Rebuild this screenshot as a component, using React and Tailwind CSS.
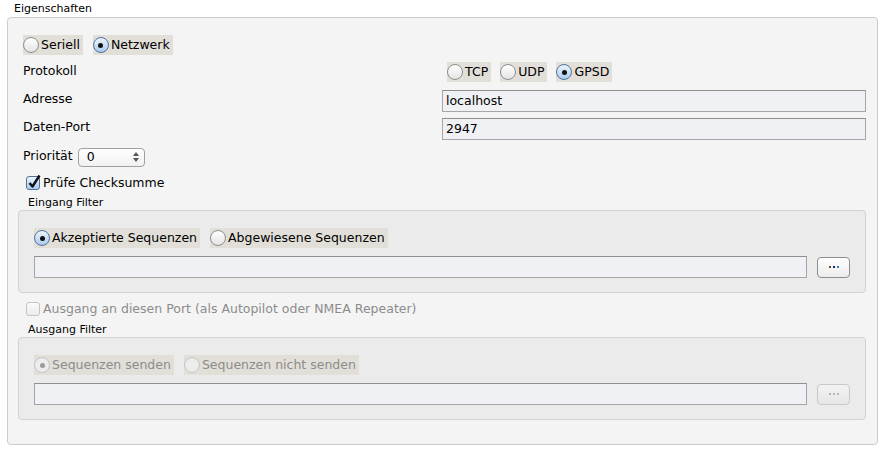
import React from 'react';

const font = { fontFamily: '"DejaVu Sans", "Liberation Sans", sans-serif' };

function Radio({ checked, disabled, label }) {
  return (
    <div className="flex items-center h-[20px] bg-[#e2dfd9] pr-[3px]">
      <span
        className={
          'relative w-[16px] h-[16px] rounded-full border flex items-center justify-center mr-[2px] ' +
          (disabled
            ? 'border-[#c4c4c4] bg-[#ececec]'
            : checked
            ? 'border-[#52729a] bg-gradient-to-b from-[#eef5fc] to-[#a9cbee]'
            : 'border-[#8e8e8e] bg-gradient-to-b from-white to-[#e4e4e4]')
        }
      >
        {checked && (
          <span className={'w-[5px] h-[5px] rounded-full ' + (disabled ? 'bg-[#9a9a9a]' : 'bg-[#111]')} />
        )}
      </span>
      <span className={disabled ? 'text-[#8c8c8c]' : 'text-black'}>{label}</span>
    </div>
  );
}

function TextField({ value, className }) {
  return (
    <div className={'h-[22px] border border-[#a6a6a6] border-t-[#8f8f8f] bg-[#f0f1f4] flex items-center px-[3px] ' + (className || '')}>
      {value}
    </div>
  );
}

function DotsButton({ disabled }) {
  return (
    <div
      className={
        'w-[33px] h-[21px] rounded-[4px] border flex items-center justify-center gap-[2px] ' +
        (disabled
          ? 'border-[#c8c8c8] bg-gradient-to-b from-[#f3f3f3] to-[#e6e6e6]'
          : 'border-[#8e8e8e] bg-gradient-to-b from-white to-[#ececec]')
      }
    >
      <span className={'w-[2px] h-[2px] ' + (disabled ? 'bg-[#b9b3ad]' : 'bg-[#6b4a2a]')} />
      <span className={'w-[2px] h-[2px] ' + (disabled ? 'bg-[#b3b6bb]' : 'bg-[#1a2a5a]')} />
      <span className={'w-[2px] h-[2px] ' + (disabled ? 'bg-[#aeb8c3]' : 'bg-[#2f7fc8]')} />
    </div>
  );
}

function FilterPanel({ first, second, disabled }) {
  return (
    <div className="h-[83px] border border-[#d2d2d2] rounded-[4px] bg-[#ebebeb] pl-[15px] pr-[15px] pt-[17px]">
      <div className="flex gap-[10px]">
        <Radio checked disabled={disabled} label={first} />
        <Radio disabled={disabled} label={second} />
      </div>
      <div className="flex items-center gap-[10px] mt-[8px]">
        <TextField value="" className="flex-1" />
        <DotsButton disabled={disabled} />
      </div>
    </div>
  );
}

export default function App() {
  return (
    <div className="w-[884px] h-[452px] bg-white text-[12.5px] text-black" style={font}>
      <div className="h-[17px] pl-[14px] pt-[2px] text-[11px] leading-[13px]">Eigenschaften</div>
      <div className="ml-[7px] w-[871px] h-[428px] border border-[#cbcbcb] rounded-[4px] bg-[#f4f4f4] pl-[10px] pr-[11px] pt-[17px]">
        <div className="pl-[5px]">
          <div className="flex gap-[10px]">
            <Radio label="Seriell" />
            <Radio checked label="Netzwerk" />
          </div>

          <div className="flex items-start h-[29px] mt-[6px]">
            <div className="w-[419px] pt-[1px]">Protokoll</div>
            <div className="flex gap-[9px] pl-[5px] pt-[1px]">
              <Radio label="TCP" />
              <Radio label="UDP" />
              <Radio checked label="GPSD" />
            </div>
          </div>

          <div className="flex items-start h-[28px]">
            <div className="w-[419px]">Adresse</div>
            <TextField value="localhost" className="flex-1" />
          </div>

          <div className="flex items-start h-[28px]">
            <div className="w-[419px]">Daten-Port</div>
            <TextField value="2947" className="flex-1" />
          </div>

          <div className="flex items-center h-[20px] mt-[1px]">
            <span className="mr-[5px] -mt-[2px]">Priorität</span>
            <div className="w-[67px] h-[19px] border border-[#a0a0a0] rounded-[4px] bg-gradient-to-b from-white to-[#f1f1f1] flex items-center justify-between pl-[8px] pr-[5px]">
              <span>0</span>
              <svg width="6" height="10" viewBox="0 0 6 10">
                <path d="M0 4 L3 0 L6 4 Z" fill="#555" />
                <path d="M0 6 L3 10 L6 6 Z" fill="#555" />
              </svg>
            </div>
          </div>

          <div className="flex items-center h-[18px] mt-[7px] pl-[3px]">
            <span className="relative w-[14px] h-[14px] rounded-[3px] border border-[#52729a] bg-gradient-to-b from-[#eef5fc] to-[#a9cbee] mr-[3px]">
              <svg className="absolute -top-[3px] left-[1px]" width="13" height="15" viewBox="0 0 13 15">
                <path d="M1.5 9 L4.5 12.5 L11.5 1.5" stroke="#111" strokeWidth="2.4" fill="none" strokeLinejoin="round" />
              </svg>
            </span>
            <span>Prüfe Checksumme</span>
          </div>
        </div>

        <div className="pl-[10px] text-[11px] leading-[13px] mt-[4px] h-[14px]">Eingang Filter</div>
        <FilterPanel first="Akzeptierte Sequenzen" second="Abgewiesene Sequenzen" />

        <div className="flex items-center h-[18px] mt-[7px] pl-[8px] text-[#8c8c8c]">
          <span className="w-[14px] h-[14px] rounded-[3px] border border-[#c4c4c4] bg-gradient-to-b from-[#fafafa] to-[#ececec] mr-[3px]" />
          <span>Ausgang an diesen Port (als Autopilot oder NMEA Repeater)</span>
        </div>

        <div className="pl-[10px] text-[11px] leading-[13px] mt-[5px] h-[14px]">Ausgang Filter</div>
        <FilterPanel first="Sequenzen senden" second="Sequenzen nicht senden" disabled />
      </div>
    </div>
  );
}
